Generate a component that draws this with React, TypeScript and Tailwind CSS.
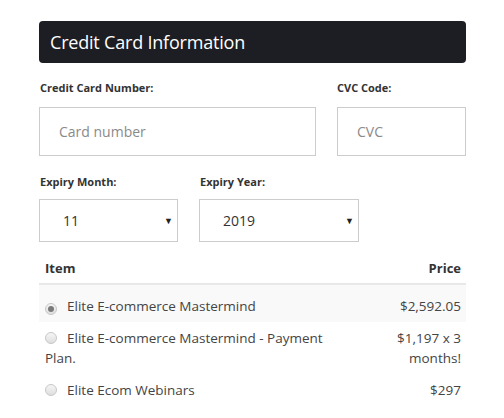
import React from 'react';

const items = [
  { name: 'Elite E-commerce Mastermind', price: '$2,592.05', checked: true },
  { name: 'Elite E-commerce Mastermind - Payment Plan.', price: '$1,197 x 3 months!', checked: false },
  { name: 'Elite Ecom Webinars', price: '$297', checked: false },
];

const Radio = ({ checked }: { checked: boolean }) => (
  <span className="inline-flex w-[12px] h-[12px] rounded-full border border-[#c8c8c8] bg-gradient-to-b from-[#f6f6f6] to-[#dedede] items-center justify-center align-[-1px] mr-[10px]">
    {checked && <span className="w-[6px] h-[6px] rounded-full bg-[#7a7a7a]" />}
  </span>
);

const Select = ({ value, width }: { value: string; width: string }) => (
  <div className={`${width} h-[43px] border border-[#cccccc] bg-white flex items-center justify-between pl-[23px] pr-[4px] text-[14px] text-[#333]`}>
    <span>{value}</span>
    <span className="text-[9px] text-[#222]">▼</span>
  </div>
);

export default function App() {
  return (
    <div className="bg-white min-h-[418px] pt-[21px] pl-[39px] font-['Open_Sans',sans-serif]">
      <div className="w-[427px]">
        <div className="h-[42px] bg-[#1c1e24] rounded-[4px] pl-[11px] flex items-center">
          <h2 className="text-white text-[18px] tracking-[-0.2px]">Credit Card Information</h2>
        </div>

        <div className="flex gap-[21px] mt-[18px]">
          <div className="w-[277px]">
            <label className="block text-[11px] leading-[14px] font-bold text-[#333] pl-[1px]">Credit Card Number:</label>
            <input
              placeholder="Card number"
              className="mt-[12px] w-full h-[49px] border border-[#cccccc] px-[19px] text-[14px] text-[#333] placeholder:text-[#8a8a8a] outline-none"
            />
          </div>
          <div className="w-[129px]">
            <label className="block text-[11px] leading-[14px] font-bold text-[#333]">CVC Code:</label>
            <input
              placeholder="CVC"
              className="mt-[12px] w-full h-[49px] border border-[#cccccc] px-[19px] text-[14px] text-[#333] placeholder:text-[#8a8a8a] outline-none"
            />
          </div>
        </div>

        <div className="flex gap-[21px] mt-[19px]">
          <div>
            <label className="block text-[11px] leading-[14px] font-bold text-[#333] pl-[1px]">Expiry Month:</label>
            <div className="mt-[10px]">
              <Select value="11" width="w-[139px]" />
            </div>
          </div>
          <div>
            <label className="block text-[11px] leading-[14px] font-bold text-[#333] pl-[1px]">Expiry Year:</label>
            <div className="mt-[10px]">
              <Select value="2019" width="w-[160px]" />
            </div>
          </div>
        </div>

        <table className="w-full mt-[4px] border-collapse text-[13.5px] text-[#444]">
          <thead>
            <tr className="border-b-2 border-[#e8e8e8]">
              <th className="text-left font-bold text-[13px] text-[#333] pl-[6px] pt-[12px] pb-[5px] leading-[20px]">Item</th>
              <th className="text-right font-bold text-[13px] text-[#333] pr-[5px] pt-[12px] pb-[5px] leading-[20px]">Price</th>
            </tr>
          </thead>
          <tbody>
            {items.map((item, i) => (
              <tr key={item.name} className={i === 0 ? 'bg-[#f9f9f9]' : ''}>
                <td className={`pl-[6px] pr-[6px] leading-[20px] align-top ${i === 0 ? 'pt-[11px] pb-[6px]' : 'py-[6px]'}`}>
                  <Radio checked={item.checked} />
                  {item.name}
                </td>
                <td className={`w-[120px] pl-[6px] pr-[5px] text-right leading-[20px] align-top ${i === 0 ? 'pt-[11px] pb-[6px]' : 'py-[6px]'}`}>
                  {item.price}
                </td>
              </tr>
            ))}
          </tbody>
        </table>
      </div>
    </div>
  );
}
